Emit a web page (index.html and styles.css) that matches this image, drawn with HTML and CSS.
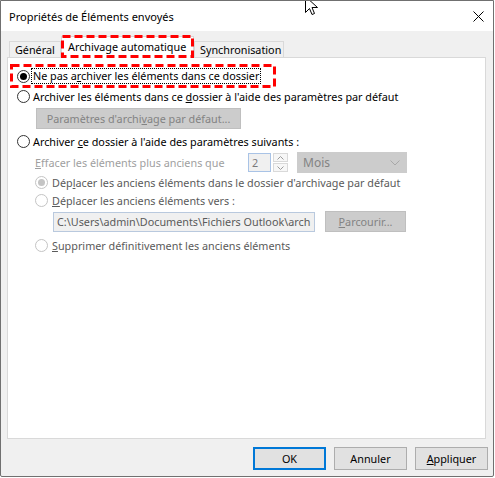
FILE: index.html
```html
<!DOCTYPE html>
<html lang="fr">
<head>
<meta charset="utf-8">
<title>Propriétés de Éléments envoyés</title>
<link rel="stylesheet" href="styles.css">
</head>
<body>
<div class="window">
  <div class="titlebar">
    <span class="title">Propriétés de Éléments envoyés</span>
    <svg class="close" width="11" height="11" viewBox="0 0 11 11"><path d="M0.5 0.5 L10.5 10.5 M10.5 0.5 L0.5 10.5" stroke="#000" stroke-width="1"/></svg>
  </div>
  <div class="content">
    <div class="tabs">
      <div class="tab">Général</div>
      <div class="tab active">Archivage automatique
        <svg class="mark mark-tab" width="133" height="23" viewBox="0 0 133 23"><rect x="1.5" y="1.5" width="130" height="20" fill="none" stroke="#f00" stroke-width="3" stroke-dasharray="8 4"/></svg>
      </div>
      <div class="tab">Synchronisation</div>
    </div>
    <div class="panel">
      <div class="opt first">
        <span class="radio checked"></span>
        <span class="focus">Ne pas a<u>r</u>chiver les éléments dans ce dossier</span>
        <svg class="mark mark-row" width="266" height="24" viewBox="0 0 266 24"><rect x="1.5" y="1.5" width="263" height="21" fill="none" stroke="#f00" stroke-width="3" stroke-dasharray="8 4"/></svg>
      </div>
      <div class="opt">
        <span class="radio"></span>
        <span>Archiver les éléments dans ce <u>d</u>ossier à l'aide des paramètres par défaut</span>
      </div>
      <div class="sub">
        <button class="btn disabled wide" type="button">Paramètres d'archi<u>v</u>age par défaut...</button>
      </div>
      <div class="opt third">
        <span class="radio"></span>
        <span>Archiver <u>c</u>e dossier à l'aide des paramètres suivants :</span>
      </div>
      <div class="sub">
        <div class="erase">
          <span class="erase-label"><u>E</u>ffacer les éléments plus anciens que</span>
          <span class="spin-input">2</span>
          <span class="spin">
            <span class="spin-btn"><svg width="7" height="4" viewBox="0 0 7 4"><path d="M0.5 3.5 L3.5 0.5 L6.5 3.5" fill="none" stroke="#9a9a9a"/></svg></span>
            <span class="spin-btn"><svg width="7" height="4" viewBox="0 0 7 4"><path d="M0.5 0.5 L3.5 3.5 L6.5 0.5" fill="none" stroke="#9a9a9a"/></svg></span>
          </span>
          <span class="select">Mois
            <svg width="10" height="6" viewBox="0 0 10 6"><path d="M0.5 0.5 L5 5 L9.5 0.5" fill="none" stroke="#a8a8a8"/></svg>
          </span>
        </div>
        <div class="opt small dis">
          <span class="radio dim checked"></span>
          <span>Dép<u>l</u>acer les anciens éléments dans le dossier d'archivage par défaut</span>
        </div>
        <div class="opt small dis">
          <span class="radio dim"></span>
          <span><u>D</u>éplacer les anciens éléments vers :</span>
        </div>
        <div class="path-row">
          <span class="path">C:\Users\admin\Documents\Fichiers Outlook\arch</span>
          <button class="btn disabled browse" type="button"><u>P</u>arcourir...</button>
        </div>
        <div class="opt small dis last">
          <span class="radio dim"></span>
          <span><u>S</u>upprimer définitivement les anciens éléments</span>
        </div>
      </div>
    </div>
    <div class="buttons">
      <button class="btn default" type="button">OK</button>
      <button class="btn" type="button">Annuler</button>
      <button class="btn" type="button"><u>A</u>ppliquer</button>
    </div>
  </div>
  <svg class="cursor" width="14" height="20" viewBox="0 0 14 20"><path d="M0.5 0.5 V16.5 L4.5 12.5 L7 18.5 L9.5 17.5 L7 11.5 H12.5 Z" fill="#fff" stroke="#000" stroke-width="1" stroke-linejoin="round"/></svg>
</div>
</body>
</html>
```
FILE: styles.css
```css
* { box-sizing: border-box; }
html, body { margin: 0; padding: 0; background: #fff; }
body {
  font-family: "Noto Sans", "Segoe UI", sans-serif;
  font-size: 10.8px;
  color: #000;
}
u { text-decoration: underline; text-underline-offset: 1px; }

.window {
  position: relative;
  width: 494px;
  height: 477px;
  border: 1px solid #707070;
  border-radius: 0 0 2px 2px;
  background: #f0f0f0;
  display: flex;
  flex-direction: column;
  overflow: hidden;
}

.titlebar {
  height: 30px;
  flex: none;
  background: #fff;
  display: flex;
  align-items: center;
  justify-content: space-between;
  padding: 0 9px 0 8px;
}
.title { font-size: 11px; }
.close { display: block; }

.content {
  flex: 1;
  display: flex;
  flex-direction: column;
  padding: 0 7px 0 6px;
}

.tabs {
  height: 26px;
  flex: none;
  display: flex;
  align-items: flex-end;
  padding-left: 2px;
}
.tab {
  height: 16px;
  line-height: 15px;
  border: 1px solid #d9d9d9;
  border-bottom: none;
  background: #f0f0f0;
  padding: 0 5px;
  white-space: nowrap;
}
.tab:first-child { width: 52px; }
.tab:last-child { width: 90px; padding-left: 5px; }
.tab.active {
  position: relative;
  z-index: 1;
  width: 133px;
  height: 22px;
  margin-bottom: -1px;
  background: #fff;
  line-height: 20px;
  padding-left: 6px;
}
.mark { position: absolute; pointer-events: none; }
.mark-tab { left: -1px; top: -2px; }
.mark-row { left: 2px; top: -2px; }

.panel {
  height: 382px;
  flex: none;
  background: #fff;
  border: 1px solid #d9d9d9;
  padding: 8px 0 0 0;
}

.opt {
  display: flex;
  align-items: center;
  height: 20px;
  white-space: nowrap;
}
.opt.first { position: relative; }
.opt.third { margin-top: 2px; }
.opt.small { height: 18px; }
.opt.last { margin-top: 4px; }
.opt.dis { color: #5a5a5a; }

.radio {
  flex: none;
  width: 13px;
  height: 13px;
  border-radius: 50%;
  border: 1px solid #333;
  background: #fff;
  margin: 0 3px 0 9px;
  display: flex;
  align-items: center;
  justify-content: center;
}
.radio.checked::after {
  content: "";
  width: 7px;
  height: 7px;
  border-radius: 50%;
  background: #000;
}
.radio.dim { border-color: #c4c4c4; margin: 0 4px 0 0; }
.radio.dim.checked::after { background: #c4c4c4; }

.focus {
  outline: 1px dotted #000;
  outline-offset: 0;
  padding: 0 1px;
  margin-left: -1px;
  line-height: 14px;
}

.sub { padding-left: 27px; }

.btn {
  font: inherit;
  height: 23px;
  width: 73px;
  background: #e1e1e1;
  border: 1px solid #adadad;
  color: #000;
  padding: 0;
  margin: 0;
}
.btn.default { border: 2px solid #0078d7; }
.btn.disabled { background: #cccccc; border-color: #bfbfbf; color: #838383; }
.btn.wide { width: 205px; height: 21px; margin: 2px 0 0 1px; display: block; }
.btn.browse { width: 81px; height: 21px; margin-left: 10px; }

.erase {
  display: flex;
  align-items: center;
  height: 21px;
  margin-top: 1px;
  white-space: nowrap;
}
.erase-label { width: 213px; color: #a0a0a0; }
.spin-input {
  width: 23px;
  height: 19px;
  border: 1px solid #a9c3e6;
  background: #f0f0f0;
  color: #7a7a7a;
  padding-left: 3px;
  line-height: 17px;
}
.spin {
  width: 15px;
  height: 19px;
  margin-left: 2px;
  display: flex;
  flex-direction: column;
  gap: 1px;
}
.spin-btn {
  flex: 1;
  border: 1px solid #d9d9d9;
  background: #f7f7f7;
  display: flex;
  align-items: center;
  justify-content: center;
}
.spin-btn svg { display: block; }
.select {
  width: 110px;
  height: 21px;
  margin-left: 9px;
  background: #cccccc;
  border: 1px solid #cccccc;
  color: #838383;
  font-size: 12px;
  display: flex;
  align-items: center;
  justify-content: space-between;
  padding: 0 6px 0 5px;
}
.select svg { display: block; }

.path-row {
  display: flex;
  align-items: center;
  height: 21px;
  margin-top: 2px;
}
.path {
  margin-left: 18px;
  width: 262px;
  height: 20px;
  border: 1px solid #b9c9de;
  background: #f0f0f0;
  color: #5a5a5a;
  padding-left: 3px;
  line-height: 18px;
  white-space: nowrap;
  overflow: hidden;
}

.buttons {
  display: flex;
  justify-content: flex-end;
  gap: 8px;
  margin: 8px -2px 0 0;
}

.cursor { position: absolute; left: 304px; top: -5px; }
```
